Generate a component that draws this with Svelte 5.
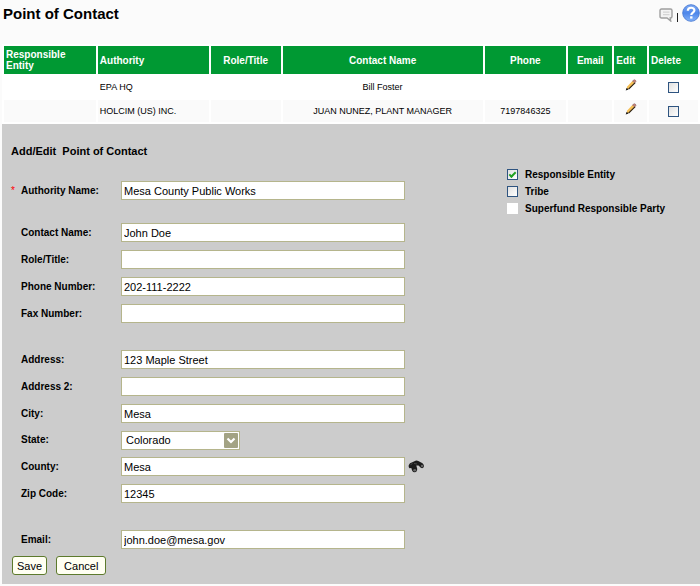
<script>
  const contacts = $state([
    { authority: 'EPA HQ', role: '', name: 'Bill Foster', phone: '', email: '', remove: false },
    { authority: 'HOLCIM (US) INC.', role: '', name: 'JUAN NUNEZ, PLANT MANAGER', phone: '7197846325', email: '', remove: false },
  ]);

  const groups = $state([
    [{ id: 'authority', label: 'Authority Name:', value: 'Mesa County Public Works', required: true }],
    [
      { id: 'contact', label: 'Contact Name:', value: 'John Doe' },
      { id: 'role', label: 'Role/Title:', value: '' },
      { id: 'phone', label: 'Phone Number:', value: '202-111-2222' },
      { id: 'fax', label: 'Fax Number:', value: '' },
    ],
    [
      { id: 'address', label: 'Address:', value: '123 Maple Street' },
      { id: 'address2', label: 'Address 2:', value: '' },
      { id: 'city', label: 'City:', value: 'Mesa' },
      { id: 'state', label: 'State:', value: 'Colorado', options: ['Colorado', 'Utah', 'Wyoming'] },
      { id: 'county', label: 'County:', value: 'Mesa', lookup: true },
      { id: 'zip', label: 'Zip Code:', value: '12345' },
    ],
    [{ id: 'email', label: 'Email:', value: 'john.doe@mesa.gov' }],
  ]);

  const flags = $state([
    { label: 'Responsible Entity', checked: true },
    { label: 'Tribe', checked: false },
    { label: 'Superfund Responsible Party', checked: false, disabled: true },
  ]);
</script>

<main>
  <header>
    <h1>Point of Contact</h1>
    <nav>
      <button type="button" class="icon comment" aria-label="Comment">
        <svg width="14" height="14" viewBox="0 0 14 14">
          <path d="M2.500 1h9q1.500 0 1.500 1.500v6q0 1.500-1.500 1.500h-.3l.5 3-3.700-3h-5.500q-1.500 0-1.500-1.500v-6q0-1.500 1.500-1.500z" fill="#f3f3f3" stroke="#a0a0a0" stroke-width="1.4" />
          <path d="M4 4.200h6.500M4 6.600h6.500" stroke="#d4d4d4" stroke-width="1.3" />
        </svg>
      </button>
      <span class="bar"></span>
      <button type="button" class="icon" aria-label="Help">
        <svg width="18" height="18" viewBox="0 0 18 18">
          <defs>
            <linearGradient id="help" x1="0" y1="0" x2="0" y2="1">
              <stop offset="0" stop-color="#7fabf4" />
              <stop offset=".5" stop-color="#4d86ea" />
              <stop offset="1" stop-color="#82b2fa" />
            </linearGradient>
          </defs>
          <circle cx="9" cy="9" r="8.3" fill="url(#help)" stroke="#4a7bd4" stroke-width=".9" />
          <path d="M5.8 6.8c0-4 6.600-4 6.600-.5 0 2.300-3.100 2.300-3.100 4.600" fill="none" stroke="#fff" stroke-width="2.2" />
          <rect x="8.1" y="12.3" width="2.4" height="2.3" fill="#fff" />
        </svg>
      </button>
    </nav>
  </header>

  <table>
    <colgroup>
      <col style:width="13.5%" /><col style:width="16.3%" /><col style:width="10.3%" /><col style:width="29.4%" />
      <col style:width="12%" /><col style:width="6.5%" /><col style:width="4.8%" /><col style:width="7.2%" />
    </colgroup>
    <thead>
      <tr>
        <th class="left">Responsible Entity</th>
        <th class="left">Authority</th>
        <th>Role/Title</th>
        <th>Contact Name</th>
        <th>Phone</th>
        <th>Email</th>
        <th class="left">Edit</th>
        <th class="left">Delete</th>
      </tr>
    </thead>
    <tbody>
      {#each contacts as c}
        <tr>
          <td></td>
          <td class="left">{c.authority}</td>
          <td>{c.role}</td>
          <td>{c.name}</td>
          <td>{c.phone}</td>
          <td>{c.email}</td>
          <td>
            <button type="button" class="icon" aria-label="Edit {c.authority}">
              <svg width="12" height="12" viewBox="0 0 12 12">
                <path d="M1.500 10.500l.7-2.900L7.400 2l2.400 2L4.300 9.800z" fill="#f6bf55" />
                <path d="M3.600 10.100l6.600-6.500" stroke="#2a2014" stroke-width="1.200" />
                <path d="M7.500 2.100L9.200.7q1.500.1 1.800 1.600L9.900 3.700z" fill="#cc8478" stroke="#6a4040" stroke-width=".5" />
                <path d="M.7 11.400l1-2.700 1.800 1.700z" fill="#111" />
              </svg>
            </button>
          </td>
          <td><input type="checkbox" aria-label="Delete {c.authority}" bind:checked={c.remove} /></td>
        </tr>
      {/each}
    </tbody>
  </table>

  <form onsubmit={(e) => e.preventDefault()}>
    <h2>Add/Edit&nbsp; Point of Contact</h2>
    <div class="columns">
      <div class="fields">
        {#each groups as group}
          <div class="group">
            {#each group as f}
              <div class="field" class:choice={f.options}>
                <span class="star">{f.required ? '*' : ''}</span>
                <label for={f.id}>{f.label}</label>
                {#if f.options}
                  <span class="select">
                    <select id={f.id} bind:value={f.value}>
                      {#each f.options as o}<option>{o}</option>{/each}
                    </select>
                    <svg width="14" height="15" viewBox="0 0 14 15" aria-hidden="true">
                      <rect width="14" height="15" rx="1" fill="#a3a384" />
                      <path d="M3.500 5.500L7 9l3.500-3.500" fill="none" stroke="#fff" stroke-width="2.2" />
                    </svg>
                  </span>
                {:else}
                  <input type="text" id={f.id} bind:value={f.value} />
                {/if}
                {#if f.lookup}
                  <button type="button" class="icon" aria-label="Look up county">
                    <svg width="17" height="13" viewBox="0 0 17 13">
                      <path d="M.7 5.200Q1.500 2.500 4.300 2.200L7.500.8q1.500-.5 2.800.3l4.200 2.200q2 1.500 1.300 3.700-1 1.800-3 .8L10.500 5.500 8.300 5.500l.9 3.200q.1 3.300-2.500 3.600-1.900 0-2.600-1.900L3.300 7.900 1.500 8.300Q.3 7.200.7 5.200z" fill="#1c1c1c" />
                      <ellipse cx="6.700" cy="10.200" rx="1.500" ry="1.200" fill="#666" />
                      <ellipse cx="14" cy="6" rx="1.200" ry="1.300" fill="#666" />
                      <path d="M2.500 4.700l2-1.200M6 3.500l3 .5" stroke="#555" stroke-width=".8" />
                    </svg>
                  </button>
                {/if}
              </div>
            {/each}
          </div>
        {/each}
      </div>
      <div class="flags">
        {#each flags as f}
          <label class="flag">
            <input type="checkbox" bind:checked={f.checked} disabled={f.disabled} />
            {f.label}
          </label>
        {/each}
      </div>
    </div>
    <div class="actions">
      <button type="submit" class="push">Save</button>
      <button type="button" class="push cancel">Cancel</button>
    </div>
  </form>
</main>

<style>
  :global(body) {
    background: #fff;
  }
  main {
    font: 10px/12px 'Liberation Sans', Arial, sans-serif;
    color: #000;
    padding: 3px 0 2px 2px;
    background: #fbfbfb;
  }
  header {
    display: flex;
    justify-content: space-between;
    align-items: flex-start;
    height: 41px;
    padding-left: 1px;
  }
  h1 {
    margin: 0;
    font-size: 15px;
    line-height: 21px;
  }
  nav {
    display: flex;
    align-items: center;
    gap: 4px;
  }
  .bar {
    width: 1px;
    height: 9px;
    margin-top: 10px;
    background: #222;
  }
  .icon {
    display: inline-flex;
    padding: 0;
    border: 0;
    background: none;
  }
  .icon.comment {
    padding-top: 4px;
  }
  table {
    width: 100%;
    table-layout: fixed;
    border-spacing: 2px;
    border-collapse: separate;
    background: #fff;
  }
  th {
    height: 28px;
    padding: 0 2px;
    background: #093;
    color: #fff;
    font-size: 10px;
    line-height: 11px;
  }
  td {
    height: 22px;
    padding: 0 2px;
    font-size: 9px;
    text-align: center;
  }
  td .icon {
    vertical-align: middle;
    margin-bottom: 4px;
  }
  .left {
    text-align: left;
  }
  tbody tr:nth-child(even) td {
    background: #fafafa;
  }
  input[type='checkbox'] {
    appearance: none;
    display: inline-grid;
    place-items: center;
    flex: none;
    width: 11px;
    height: 11px;
    margin: 0;
    border: 1px solid #2e5480;
    background: linear-gradient(135deg, #e0e0e0, #fff);
    vertical-align: middle;
  }
  input[type='checkbox']:checked::before {
    content: '';
    width: 5px;
    height: 2px;
    margin-bottom: 2px;
    border: solid #21a121;
    border-width: 0 0 2px 2px;
    transform: rotate(-45deg);
  }
  input[type='checkbox']:disabled {
    border-color: #fff;
    background: #fff;
  }
  form {
    padding: 20px 7px 9px 9px;
    background: #ccc;
  }
  h2 {
    margin: 0;
    font-size: 11px;
    line-height: 14px;
  }
  .columns {
    display: flex;
    justify-content: space-between;
  }
  .fields {
    display: flex;
    flex-direction: column;
    gap: 19px;
    flex: 0 1 430px;
    padding-top: 19px;
  }
  .group:first-child {
    margin-bottom: -4px;
  }
  .field {
    display: flex;
    align-items: center;
    height: 27px;
  }
  .choice {
    height: 26px;
  }
  .star {
    width: 10px;
    color: #f00;
  }
  .field label {
    width: 100px;
    flex: none;
    font-weight: bold;
  }
  .field input,
  select {
    box-sizing: border-box;
    height: 19px;
    margin: 0;
    border: 1px solid #b5b58c;
    border-radius: 0;
    background: #fff;
    color: #000;
    font: 11px/16px 'Liberation Sans', Arial, sans-serif;
  }
  .field input {
    width: 284px;
    padding: 0 2px;
  }
  .select {
    position: relative;
    display: flex;
  }
  select {
    appearance: none;
    width: 119px;
    padding: 0 18px 0 4px;
  }
  .select svg {
    position: absolute;
    top: 2px;
    right: 2px;
    pointer-events: none;
  }
  .field .icon {
    margin-left: 3px;
  }
  .flags {
    flex: 0 0 186px;
    padding-top: 8px;
  }
  .flag {
    display: flex;
    align-items: center;
    gap: 7px;
    height: 17px;
    font-weight: bold;
  }
  .actions {
    display: flex;
    gap: 9px;
    margin-top: 3px;
    padding-left: 1px;
  }
  .push {
    height: 19px;
    padding: 0 4px;
    border: 1px solid #5d7a2c;
    border-radius: 3px;
    background: #fffff2;
    color: #000;
    font: 11px/16px 'Liberation Sans', Arial, sans-serif;
  }
  .cancel {
    padding: 0 7px;
  }
</style>
